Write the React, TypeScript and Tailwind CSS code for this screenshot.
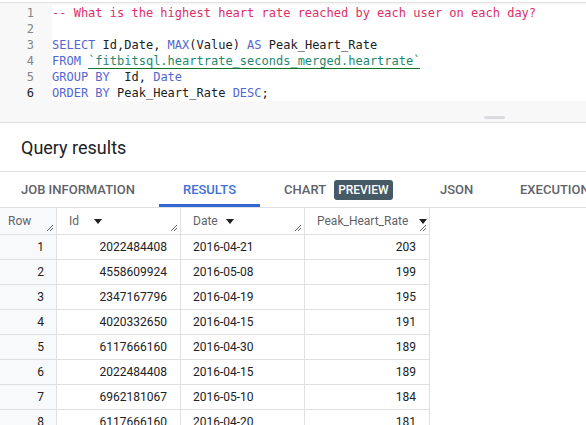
const code: { n: number; parts: [string, string][] }[] = [
  { n: 1, parts: [['-- What is the highest heart rate reached by each user on each day?', 'text-[#dc2f68]']] },
  { n: 2, parts: [] },
  {
    n: 3,
    parts: [
      ['SELECT ', 'text-[#5367d1]'],
      ['Id,Date, ', 'text-[#202124]'],
      ['MAX', 'text-[#5367d1]'],
      ['(Value) ', 'text-[#202124]'],
      ['AS ', 'text-[#5367d1]'],
      ['Peak_Heart_Rate', 'text-[#202124]'],
    ],
  },
  {
    n: 4,
    parts: [
      ['FROM ', 'text-[#5367d1]'],
      ['`fitbitsql.heartrate_seconds_merged.heartrate`', 'text-[#1c8a6e] border-b border-[#137333]'],
    ],
  },
  {
    n: 5,
    parts: [
      ['GROUP BY  ', 'text-[#5367d1]'],
      ['Id', 'text-[#202124]'],
      [', ', 'text-[#202124]'],
      ['Date', 'text-[#5367d1]'],
    ],
  },
  {
    n: 6,
    parts: [
      ['ORDER BY ', 'text-[#5367d1]'],
      ['Peak_Heart_Rate ', 'text-[#202124]'],
      ['DESC', 'text-[#5367d1]'],
      [';', 'text-[#202124]'],
    ],
  },
];

const rows = [
  ['2022484408', '2016-04-21', '203'],
  ['4558609924', '2016-05-08', '199'],
  ['2347167796', '2016-04-19', '195'],
  ['4020332650', '2016-04-15', '191'],
  ['6117666160', '2016-04-30', '189'],
  ['2022484408', '2016-04-15', '189'],
  ['6962181067', '2016-05-10', '184'],
  ['6117666160', '2016-04-20', '181'],
];

function Resize() {
  return (
    <svg className="absolute right-[2px] bottom-[2px]" width="8" height="8" viewBox="0 0 8 8">
      <path d="M1 7 L7 1 M4 7 L7 4" stroke="#5f6368" strokeWidth="1" />
    </svg>
  );
}

function SortArrow({ className }: { className: string }) {
  return (
    <svg width="8" height="5" viewBox="0 0 8 5" className={className}>
      <path d="M0 0 H8 L4 5 Z" fill="#202124" />
    </svg>
  );
}

export default function App() {
  return (
    <div className="w-[586px] h-[425px] overflow-hidden bg-white font-['Roboto',sans-serif]">
      {/* Editor */}
      <div className="mt-[2px] border-t border-[#e0e0e0] bg-[#f8f8f8]">
        <div className="flex pt-[2px]">
          <div className="w-[52px] shrink-0 font-['DejaVu_Sans_Mono',monospace] text-[12px] leading-[16px] text-[#80868b]">
            {code.map((l) => (
              <div key={l.n} className={`pr-[18px] text-right ${l.n === 6 ? 'text-[#202124]' : ''}`}>
                {l.n}
              </div>
            ))}
          </div>
          <div className="flex-1 bg-white font-['DejaVu_Sans_Mono',monospace] text-[12px] leading-[16px] whitespace-pre">
            {code.map((l) => (
              <div key={l.n} className="h-[16px]">
                {l.parts.map(([t, c], i) => (
                  <span key={i} className={c}>
                    {t}
                  </span>
                ))}
              </div>
            ))}
          </div>
        </div>
        <div className="h-[22px] flex items-end justify-end pr-[81px] pb-[3px] border-b border-[#dadce0]">
          <div className="w-[21px] h-[3px] rounded-full bg-[#dadce0]" />
        </div>
      </div>

      {/* Query results header */}
      <div className="h-[49px] flex items-center pl-[21px] text-[18px] text-[#202124] border-b border-[#e0e0e0]">
        Query results
      </div>

      {/* Tabs */}
      <div className="flex h-[36px] text-[13px] font-medium text-[#5f6368] border-b border-[#e0e0e0] whitespace-nowrap">
        <div className="w-[159px] shrink-0 pl-[21px] flex items-center">JOB INFORMATION</div>
        <div className="w-[101px] shrink-0 flex items-center justify-center text-[#3f6fd8] border-b-[3px] border-[#3367d6] pt-[3px]">
          RESULTS
        </div>
        <div className="w-[156px] shrink-0 pl-[24px] flex items-center">
          CHART
          <span className="ml-[8px] px-[4px] h-[20px] flex items-center rounded-[3px] bg-[#455a64] text-[12px] text-white">
            PREVIEW
          </span>
        </div>
        <div className="w-[104px] shrink-0 pl-[24px] flex items-center">JSON</div>
        <div className="shrink-0 flex items-center">EXECUTION DETAILS</div>
      </div>

      {/* Table */}
      <div className="w-[430px] text-[12px] text-[#202124]">
        <div className="flex h-[27px] border-b border-[#e0e0e0] text-[#5f6368]">
          <div className="relative w-[57px] bg-[#f8f9fa] border-r border-[#e0e0e0] pl-[8px] flex items-center">
            Row
            <Resize />
          </div>
          <div className="relative w-[124px] border-r border-[#e0e0e0] pl-[12px] flex items-center">
            Id
            <SortArrow className="ml-[15px]" />
            <Resize />
          </div>
          <div className="relative w-[124px] border-r border-[#e0e0e0] pl-[12px] flex items-center">
            Date
            <SortArrow className="ml-[8px]" />
            <Resize />
          </div>
          <div className="relative w-[125px] border-r border-[#e0e0e0] pl-[12px] flex items-center">
            Peak_Heart_Rate
            <SortArrow className="ml-auto mr-[2px]" />
            <Resize />
          </div>
        </div>
        {rows.map((r, i) => (
          <div key={i} className="flex h-[25px] border-b border-[#e0e0e0]">
            <div className="w-[57px] bg-[#f8f9fa] border-r border-[#e0e0e0] pr-[12px] flex items-center justify-end">
              {i + 1}
            </div>
            <div className="w-[124px] border-r border-[#e0e0e0] pr-[13px] flex items-center justify-end">{r[0]}</div>
            <div className="w-[124px] border-r border-[#e0e0e0] pl-[12px] flex items-center">{r[1]}</div>
            <div className="w-[125px] border-r border-[#e0e0e0] pr-[13px] flex items-center justify-end">{r[2]}</div>
          </div>
        ))}
      </div>
    </div>
  );
}
